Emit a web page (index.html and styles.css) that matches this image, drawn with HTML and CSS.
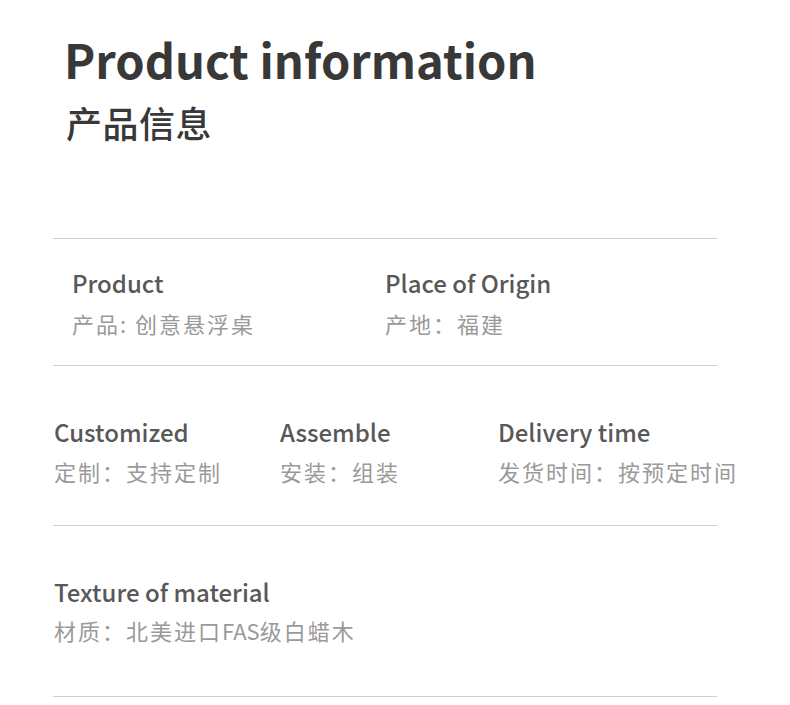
FILE: index.html
```html
<!DOCTYPE html>
<html lang="zh-CN">
<head>
<meta charset="utf-8">
<link rel="stylesheet" href="styles.css">
</head>
<body>
<div class="page">
  <header class="head">
    <h1 class="title-en">Product information</h1>
    <h2 class="title-zh">产品信息</h2>
  </header>
  <section class="table">
    <div class="row row-1">
      <div class="cell cell-a">
        <div class="label">Product</div>
        <div class="value">产品:&nbsp;创意悬浮桌</div>
      </div>
      <div class="cell cell-b">
        <div class="label">Place of Origin</div>
        <div class="value">产地：福建</div>
      </div>
    </div>
    <div class="row row-2">
      <div class="cell c1">
        <div class="label">Customized</div>
        <div class="value">定制：支持定制</div>
      </div>
      <div class="cell c2">
        <div class="label">Assemble</div>
        <div class="value">安装：组装</div>
      </div>
      <div class="cell c3">
        <div class="label">Delivery time</div>
        <div class="value">发货时间：按预定时间</div>
      </div>
    </div>
    <div class="row row-3">
      <div class="cell">
        <div class="label">Texture of material</div>
        <div class="value">材质：北美进口<span class="latin">FAS</span>级白蜡木</div>
      </div>
    </div>
  </section>
</div>
</body>
</html>
```
FILE: styles.css
```css
* { box-sizing: border-box; }
html, body { margin: 0; padding: 0; background: #fff; }
body {
  font-family: "Noto Sans CJK SC", "Noto Sans", sans-serif;
  width: 790px;
  height: 705px;
  overflow: hidden;
}
.page { padding-top: 27px; }
.head { padding-left: 64px; }
.title-en {
  margin: 0;
  font-size: 47px;
  font-weight: 700;
  line-height: 64px;
  color: #383838;
}
.title-zh {
  margin: 5px 0 0 2px;
  font-size: 36px;
  font-weight: 500;
  letter-spacing: 0.5px;
  line-height: 52px;
  color: #383838;
}
.table {
  margin-top: 90px;
  margin-left: 53px;
  width: 664px;
  border-top: 1px solid #cfcfcf;
}
.row {
  display: flex;
  border-bottom: 1px solid #cfcfcf;
}
.cell { flex-shrink: 0; }
.label {
  font-size: 24px;
  font-weight: 500;
  line-height: 30px;
  color: #585858;
}
.value {
  font-size: 22px;
  font-weight: 400;
  line-height: 30px;
  letter-spacing: 2px;
  color: #9a9a9a;
  white-space: nowrap;
}
.value .latin { letter-spacing: 0; }
.row-1 { padding: 29px 0 27px 19px; }
.row-1 .value { margin-top: 10px; }
.row-1 .cell-a { width: 313px; }
.row-2 { padding: 51px 0 39px 1px; }
.row-2 .value { margin-top: 9px; }
.row-2 .c1 { width: 226px; }
.row-2 .c2 { width: 218px; }
.row-3 { padding: 51px 0 51px 1px; }
.row-3 .value { margin-top: 8px; }
```
